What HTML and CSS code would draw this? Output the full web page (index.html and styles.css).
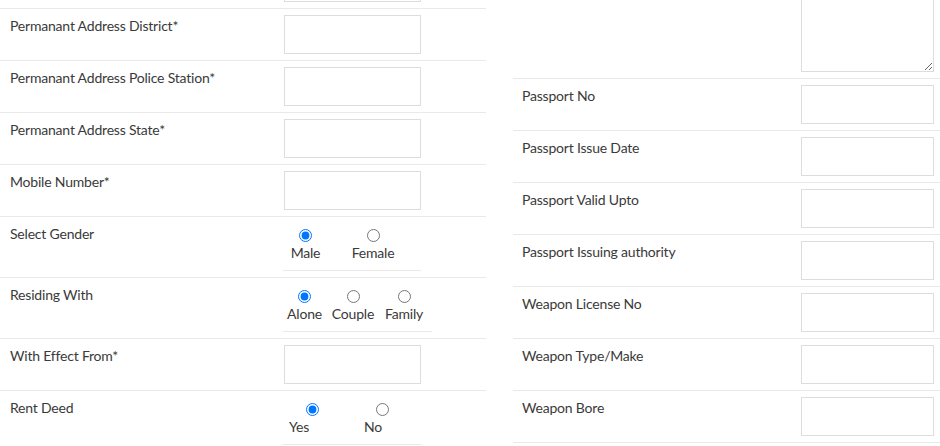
FILE: index.html
```html
<!DOCTYPE html>
<html lang="en">
<head>
    <meta charset="UTF-8">
    <title>Tenant Registration</title>
    <link rel="stylesheet" href="styles.css">
</head>
<body>

    <div class="form-wrap">

        <!-- Left column -->
        <div class="tbl tbl-left">
            <div class="row">
                <div class="lbl">Permanant Address*</div>
                <div class="fld"><input type="text" class="box"></div>
            </div>
            <div class="row">
                <div class="lbl">Permanant Address District*</div>
                <div class="fld"><input type="text" class="box"></div>
            </div>
            <div class="row">
                <div class="lbl">Permanant Address Police Station*</div>
                <div class="fld"><input type="text" class="box"></div>
            </div>
            <div class="row">
                <div class="lbl">Permanant Address State*</div>
                <div class="fld"><input type="text" class="box"></div>
            </div>
            <div class="row">
                <div class="lbl">Mobile Number*</div>
                <div class="fld"><input type="text" class="box"></div>
            </div>
            <div class="row">
                <div class="lbl">Select Gender</div>
                <div class="fld">
                    <div class="opts">
                        <div class="opt g-male"><input type="radio" name="gender" id="male" checked><label for="male">Male</label></div>
                        <div class="opt g-female"><input type="radio" name="gender" id="female"><label for="female">Female</label></div>
                    </div>
                </div>
            </div>
            <div class="row">
                <div class="lbl">Residing With</div>
                <div class="fld">
                    <div class="opts opts-wide">
                        <div class="opt r-alone"><input type="radio" name="resid" id="alone" checked><label for="alone">Alone</label></div>
                        <div class="opt r-couple"><input type="radio" name="resid" id="couple"><label for="couple">Couple</label></div>
                        <div class="opt r-family"><input type="radio" name="resid" id="family"><label for="family">Family</label></div>
                    </div>
                </div>
            </div>
            <div class="row">
                <div class="lbl">With Effect From*</div>
                <div class="fld"><input type="text" class="box"></div>
            </div>
            <div class="row">
                <div class="lbl">Rent Deed</div>
                <div class="fld">
                    <div class="opts">
                        <div class="opt d-yes"><input type="radio" name="deed" id="yes" checked><label for="yes">Yes</label></div>
                        <div class="opt d-no"><input type="radio" name="deed" id="no"><label for="no">No</label></div>
                    </div>
                </div>
            </div>
        </div>

        <!-- Right column -->
        <div class="tbl tbl-right">
            <div class="row row-tall">
                <div class="lbl">Identification Marks</div>
                <div class="fld"><textarea class="box area"></textarea></div>
            </div>
            <div class="row">
                <div class="lbl">Passport No</div>
                <div class="fld"><input type="text" class="box"></div>
            </div>
            <div class="row">
                <div class="lbl">Passport Issue Date</div>
                <div class="fld"><input type="text" class="box"></div>
            </div>
            <div class="row">
                <div class="lbl">Passport Valid Upto</div>
                <div class="fld"><input type="text" class="box"></div>
            </div>
            <div class="row">
                <div class="lbl">Passport Issuing authority</div>
                <div class="fld"><input type="text" class="box"></div>
            </div>
            <div class="row">
                <div class="lbl">Weapon License No</div>
                <div class="fld"><input type="text" class="box"></div>
            </div>
            <div class="row">
                <div class="lbl">Weapon Type/Make</div>
                <div class="fld"><input type="text" class="box"></div>
            </div>
            <div class="row">
                <div class="lbl">Weapon Bore</div>
                <div class="fld"><input type="text" class="box"></div>
            </div>
            <div class="row">
                <div class="lbl">Weapon Valid Upto</div>
                <div class="fld"><input type="text" class="box"></div>
            </div>
        </div>

    </div>

</body>
</html>
```

FILE: styles.css
```css
body { margin: 0; background: #fff; font-family: Lato, "Open Sans", sans-serif; font-size: 14px; letter-spacing: -0.2px; color: #3a3a3a; overflow: hidden; }

/* page is shown scrolled down a bit */
.form-wrap { display: flex; gap: 27px; margin-top: -44px; }

.tbl { flex: none; }
.tbl-left { width: 486px; }
.tbl-right { width: 427px; }

.row { display: grid; grid-template-columns: 274px 1fr; border-top: 1px solid #e9e9e9; }
.tbl-right .row { grid-template-columns: 278px 1fr; }
.lbl { padding: 7px 10px 6px 10px; line-height: 20px; }
.tbl-right .lbl { padding-left: 9px; }
.fld { padding: 6px 6px 6px 10px; }

.box { display: block; box-sizing: border-box; width: 137px; height: 39px; margin: 0; border: 1px solid #ddd; background: #fff; font: inherit; }
.tbl-right .box { width: 133px; }
.area { height: 109px; resize: vertical; }

/* radio groups */
.opts { display: flex; width: 138px; margin-left: -1px; border-bottom: 1px solid #e9e9e9; }
.opts-wide { width: 149px; }
.opt { display: flex; flex-direction: column; align-items: center; padding-top: 6px; }
.opt input { width: 13px; height: 13px; margin: 0; }
.opt label { line-height: 20px; margin-top: 1px; padding-bottom: 7px; }

.g-male { width: 45px; }
.g-female { width: 90px; }
.r-alone { width: 43px; }
.r-couple { width: 54px; }
.r-family { width: 48px; }
.d-yes { width: 32px; }
.d-yes input { margin-left: 26px; }
.d-no { width: 48px; margin-left: 34px; }
.d-no input { margin-left: 18px; }
```
